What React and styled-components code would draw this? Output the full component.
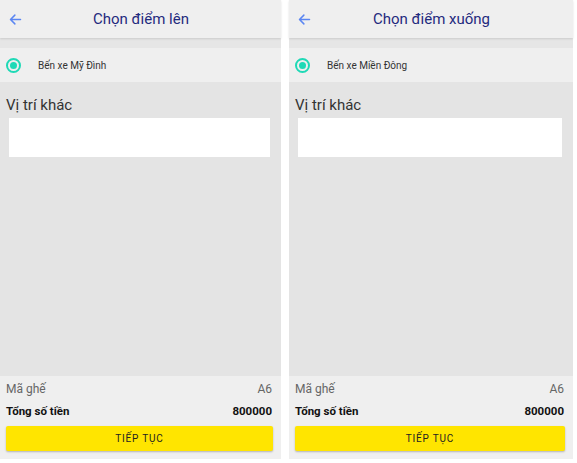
import React from "react";
import styled, { createGlobalStyle } from "styled-components";

const GlobalStyle = createGlobalStyle`
  html, body {
    margin: 0;
    padding: 0;
    background: #ffffff;
    font-family: Roboto, "Liberation Sans", sans-serif;
  }
`;

const screens = [
  { title: "Chọn điểm lên", station: "Bến xe Mỹ Đình", width: 281 },
  { title: "Chọn điểm xuống", station: "Bến xe Miền Đông", width: 284 },
];

function App() {
  return (
    <>
      <GlobalStyle />
      <Page>
        {screens.map((s) => (
          <Screen key={s.title} $width={s.width}>
            <Header>
              <BackButton>
                <svg width="15" height="15" viewBox="0 0 24 24" fill="none">
                  <path
                    d="M20 12H5M11 5l-7 7 7 7"
                    stroke="#5b86f2"
                    strokeWidth="2.4"
                    strokeLinecap="round"
                    strokeLinejoin="round"
                  />
                </svg>
              </BackButton>
              <Title>{s.title}</Title>
            </Header>
            <Gap />
            <RadioRow>
              <Radio />
              <Station>{s.station}</Station>
            </RadioRow>
            <Main>
              <Label>Vị trí khác</Label>
              <Input />
            </Main>
            <Footer>
              <InfoRow>
                <span>Mã ghế</span>
                <span>A6</span>
              </InfoRow>
              <InfoRow $bold>
                <span>Tổng số tiền</span>
                <span>800000</span>
              </InfoRow>
              <Button>TIẾP TỤC</Button>
            </Footer>
          </Screen>
        ))}
      </Page>
    </>
  );
}

const Page = styled.div`
  display: flex;
  gap: 8px;
  height: 463px;
  width: 577px;
  align-items: flex-start;
`;

const Screen = styled.div`
  width: ${(p) => p.$width}px;
  height: 459px;
  display: flex;
  flex-direction: column;
  background: #e4e4e4;
`;

const Header = styled.div`
  height: 38px;
  flex: none;
  background: #efefef;
  display: flex;
  align-items: center;
  position: relative;
  box-shadow: 0 1px 2px rgba(0, 0, 0, 0.12);
  z-index: 1;
`;

const BackButton = styled.div`
  width: 28px;
  display: flex;
  justify-content: center;
  padding-left: 1px;
`;

const Title = styled.div`
  flex: 1;
  text-align: center;
  margin-right: 28px;
  color: #1f2a7e;
  font-size: 15px;
`;

const Gap = styled.div`
  height: 10px;
  flex: none;
  background: #e6e6e6;
`;

const RadioRow = styled.div`
  height: 34px;
  flex: none;
  background: #efefef;
  display: flex;
  align-items: center;
  padding-left: 6px;
`;

const Radio = styled.div`
  width: 11px;
  height: 11px;
  border-radius: 50%;
  border: 2px solid #1fd9b6;
  display: flex;
  align-items: center;
  justify-content: center;
  &::after {
    content: "";
    width: 7px;
    height: 7px;
    border-radius: 50%;
    background: #1fd9b6;
  }
`;

const Station = styled.div`
  margin-left: 17px;
  font-size: 10px;
  color: #333;
`;

const Main = styled.div`
  flex: 1;
  padding: 14px 11px 0 6px;
`;

const Label = styled.div`
  font-size: 15px;
  color: #333;
  line-height: 19px;
`;

const Input = styled.div`
  height: 39px;
  background: #ffffff;
  margin: 3px 0 0 3px;
`;

const Footer = styled.div`
  height: 83px;
  flex: none;
  background: #efefef;
  padding: 2px 9px 0 6px;
  box-sizing: border-box;
`;

const InfoRow = styled.div`
  display: flex;
  justify-content: space-between;
  font-size: ${(p) => (p.$bold ? "11.5px" : "12px")};
  font-weight: ${(p) => (p.$bold ? 700 : 400)};
  color: ${(p) => (p.$bold ? "#111" : "#666")};
  height: 22px;
  align-items: center;
`;

const Button = styled.div`
  margin-top: 4px;
  height: 25px;
  background: #ffe500;
  border-radius: 2px;
  box-shadow: 0 1px 2px rgba(0, 0, 0, 0.25);
  display: flex;
  align-items: center;
  justify-content: center;
  font-size: 10px;
  letter-spacing: 0.8px;
  color: #222;
  margin-right: -1px;
`;

export default App;
